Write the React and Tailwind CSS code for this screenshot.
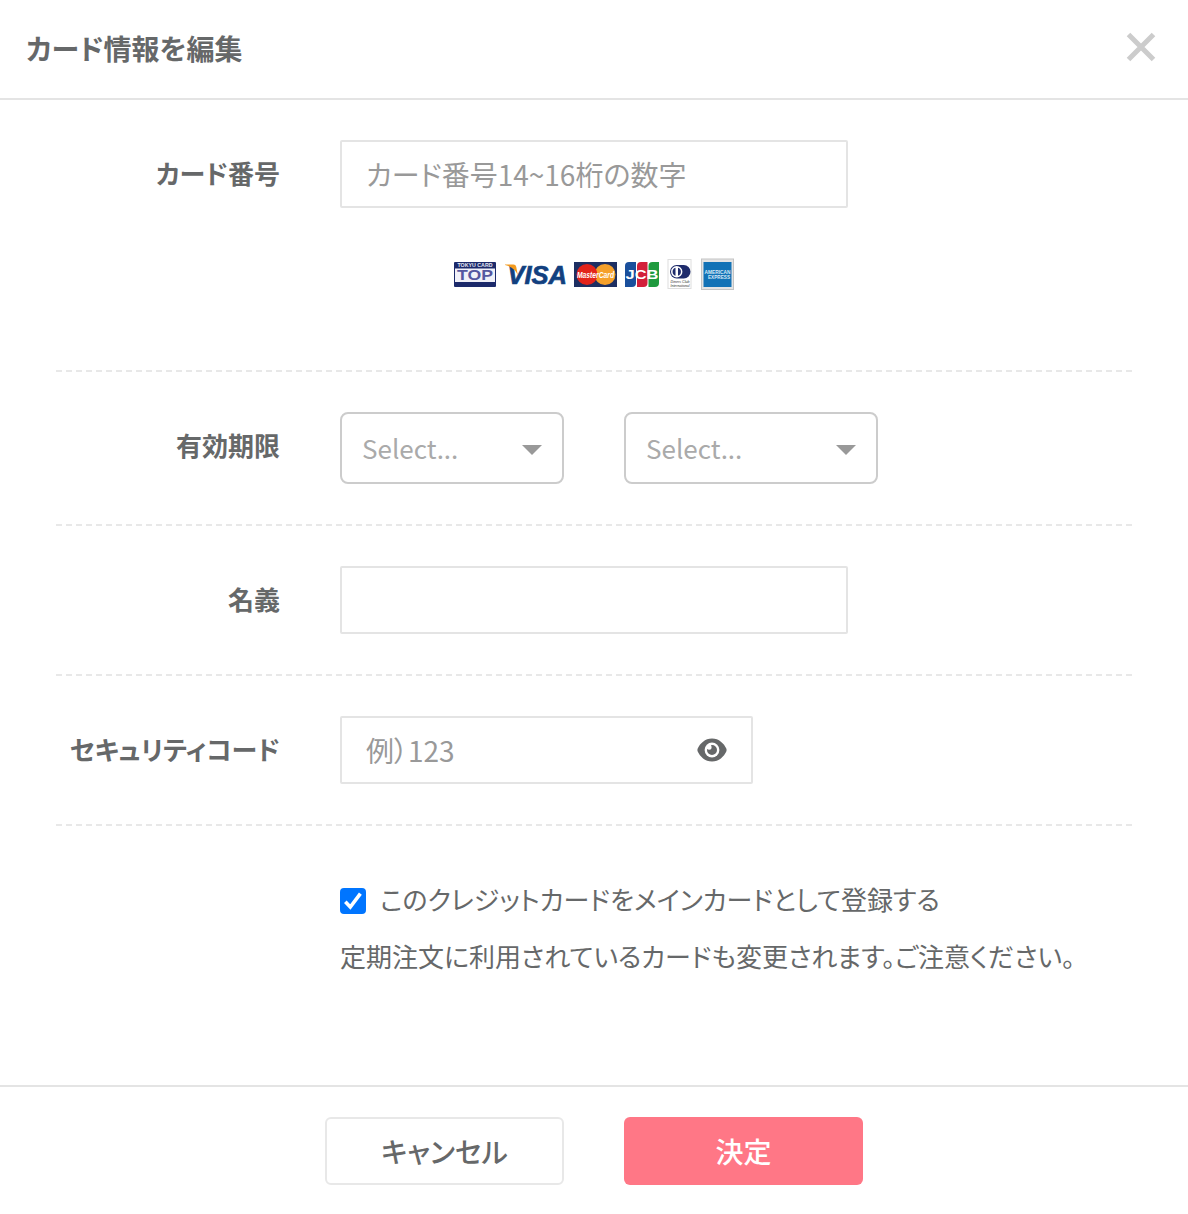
import React, { useState } from 'react'

function Row({ label, children, className = '' }) {
    return (
        <div className={`flex border-b-2 border-dashed border-[#e8e8e8] pt-10 ${className}`}>
            <div className="w-[224px] shrink-0 text-right text-[26px] leading-[66px] font-bold">{label}</div>
            <div className="ml-[60px]">{children}</div>
        </div>
    )
}

function Select({ className }) {
    return (
        <button type="button" className={`flex h-[72px] items-center justify-between rounded-lg border-2 border-[#cccccc] pt-0.5 pr-5 pl-5 ${className}`}>
            <span className="mb-[3px] text-[26px] leading-[39px] text-[#aaaaaa]">Select...</span>
            <svg width="20" height="10" viewBox="0 0 20 10" className="mt-0.5">
                <path d="M0 0h20L10 10z" fill="#999999" />
            </svg>
        </button>
    )
}

function EyeIcon() {
    return (
        <svg width="30" height="24" viewBox="0 0 30 24" className="mb-px shrink-0">
            <path d="M15 .5C22 .5 27 5.500 29.300 10.500q.7 1.500 0 3C27 18.500 22 23.500 15 23.500S3 18.500.7 13.500q-.7-1.500 0-3C3 5.500 8 .5 15 .5z" fill="#666869" />
            <circle cx="15" cy="12" r="7.400" fill="#ffffff" />
            <path d="M15 7a5 5 0 1 1-5 5q0-.5.1-1 .9.7 2 .7a2.500 2.500 0 0 0 2.500-2.500q0-1.200-.7-2 .5-.2 1.100-.2z" fill="#666869" />
        </svg>
    )
}

function CardBrands() {
    return (
        <svg width="282" height="34" viewBox="0 0 282 34" className="block" fontFamily="Liberation Sans, sans-serif">
            {/* Tokyu Top */}
            <rect x="1" y="4" width="42" height="25" rx="1" fill="#1c2a6b" />
            <rect x="2" y="10.500" width="40" height="13.500" fill="#f1f1f9" />
            <text x="22" y="8.800" fontSize="5" fontWeight="700" fill="#e6e8f4" textAnchor="middle" textLength="35" lengthAdjust="spacingAndGlyphs">TOKYU CARD</text>
            <text x="22" y="22.300" fontSize="14" fontWeight="700" fill="#5557a0" textAnchor="middle" textLength="36" lengthAdjust="spacingAndGlyphs">TOP</text>

            {/* Visa */}
            <text x="54.500" y="25.500" fontSize="26" fontWeight="700" fontStyle="italic" fill="#12407f" stroke="#12407f" strokeWidth=".7" textLength="59.500" lengthAdjust="spacingAndGlyphs">VISA</text>
            <path d="M52 6.500h8.500q2.200 0 2.700 2.200l1.600 8.300q-3.200-7.500-12.800-10z" fill="#f39a1d" />

            {/* MasterCard */}
            <rect x="121" y="4" width="43" height="25" fill="#1d2f62" />
            <circle cx="152" cy="16.500" r="10.500" fill="#f5a02a" />
            <circle cx="134" cy="16.500" r="10.500" fill="#e3231b" />
            <text x="142.500" y="19.500" fontSize="8.500" fontWeight="700" fontStyle="italic" fill="#ffffff" textAnchor="middle" textLength="37" lengthAdjust="spacingAndGlyphs">MasterCard</text>

            {/* JCB */}
            <path d="M176 4h7v21q0 4-4 4h-7V8q0-4 4-4z" fill="#1a4f9c" />
            <path d="M188 4h6.500v21q0 4-4 4H184V8q0-4 4-4z" fill="#d2203a" />
            <path d="M199.500 4h6.500v21q0 4-4 4h-6.500V8q0-4 4-4z" fill="#1f9a3e" />
            <text x="189" y="21" fontSize="12" fontWeight="700" fill="#ffffff" textAnchor="middle" textLength="33" lengthAdjust="spacingAndGlyphs">JCB</text>

            {/* Diners Club */}
            <rect x="215" y="1.500" width="23" height="29" fill="#ffffff" stroke="#dedede" />
            <rect x="217" y="7" width="20.500" height="13.500" rx="6.700" fill="#1f2c6c" />
            <circle cx="223.700" cy="13.700" r="5.700" fill="#ffffff" />
            <path d="M222.500 9.700a4.200 4.200 0 0 0 0 8zM225 9.700a4.200 4.200 0 0 1 0 8z" fill="#1f2c6c" />
            <text x="227" y="25" fontSize="4" fontStyle="italic" fill="#333333" textAnchor="middle" textLength="19" lengthAdjust="spacingAndGlyphs">Diners Club</text>
            <text x="227" y="29" fontSize="4" fontStyle="italic" fill="#333333" textAnchor="middle" textLength="19" lengthAdjust="spacingAndGlyphs">International</text>

            {/* American Express */}
            <rect x="248.500" y="1" width="32" height="30.500" fill="#e4e4e4" stroke="#c4c4c4" />
            <rect x="250.500" y="4" width="28" height="25" fill="#1272b6" />
            <text x="264.500" y="15.500" fontSize="5" fontWeight="700" fill="#d7e9f6" textAnchor="middle" textLength="26" lengthAdjust="spacingAndGlyphs">AMERICAN</text>
            <text x="266" y="21.200" fontSize="5" fontWeight="700" fill="#d7e9f6" textAnchor="middle" textLength="22" lengthAdjust="spacingAndGlyphs">EXPRESS</text>
        </svg>
    )
}

export default function App() {
    const [main, setMain] = useState(true)

    return (
        <div className="flex h-[1214px] w-[1188px] flex-col bg-white font-['Noto_Sans_CJK_JP',sans-serif] text-[#666869] [font-feature-settings:'palt']">
            <header className="flex h-[100px] items-center justify-between border-b-2 border-[#e4e4e4] pl-[26px] pr-8">
                <h1 className="mb-0.5 text-[28px] leading-[42px] font-bold">カード情報を編集</h1>
                <button type="button" aria-label="閉じる" className="mb-1">
                    <svg width="30" height="30" viewBox="0 0 30 30" fill="none" stroke="#cccccc" strokeWidth="5" className="block">
                        <path d="M2.500 2.500l25 25M27.500 2.500l-25 25" />
                    </svg>
                </button>
            </header>

            <main className="flex-1 px-14">
                <Row label="カード番号" className="h-[272px]">
                    <input
                        type="text"
                        placeholder="カード番号14~16桁の数字"
                        className="block h-[68px] w-[508px] rounded-[2px] border-2 border-[#e4e4e4] px-6 text-[28px] placeholder:text-[#999999]"
                    />
                    <div className="mt-[50px] flex justify-center">
                        <CardBrands />
                    </div>
                </Row>
                <Row label="有効期限" className="h-[154px]">
                    <div className="flex gap-[60px]">
                        <Select className="w-[224px]" />
                        <Select className="w-[254px]" />
                    </div>
                </Row>
                <Row label="名義" className="h-[150px]">
                    <input type="text" className="block h-[68px] w-[508px] rounded-[2px] border-2 border-[#e4e4e4] px-6 text-[28px]" />
                </Row>
                <Row label="セキュリティコード" className="h-[150px]">
                    <div className="flex h-[68px] w-[413px] items-center rounded-[2px] border-2 border-[#e4e4e4] pr-6 pl-6">
                        <input type="text" placeholder="例）123" className="h-full min-w-0 flex-1 text-[28px] placeholder:text-[#999999]" />
                        <EyeIcon />
                    </div>
                </Row>
                <div className="ml-[284px] pt-[53px] text-[26px] leading-[39px]">
                    <label className="flex items-center">
                        <input type="checkbox" className="peer sr-only" checked={main} onChange={e => setMain(e.target.checked)} />
                        <span className="mt-1 flex size-[26px] items-center justify-center rounded-[4px] border-2 border-[#767676] bg-white peer-checked:border-[#0075ff] peer-checked:bg-[#0075ff]">
                            {main && (
                                <svg width="20" height="20" viewBox="0 0 20 20" fill="none" stroke="#ffffff" strokeWidth="3.600" className="shrink-0">
                                    <path d="M2.300 10.800l5 5.200L17.400 2.700" />
                                </svg>
                            )}
                        </span>
                        <span className="ml-[14px]">このクレジットカードをメインカードとして登録する</span>
                    </label>
                    <p className="mt-[18px]">定期注文に利用されているカードも変更されます。ご注意ください。</p>
                </div>
            </main>

            <footer className="flex h-[129px] justify-center gap-[60px] border-t-2 border-[#e4e4e4] pt-[30px] text-[28px]">
                <button type="button" className="h-[68px] w-[239px] rounded-[6px] border-2 border-[#e8e8e8] font-medium">キャンセル</button>
                <button type="button" className="h-[68px] w-[239px] rounded-[6px] bg-[#ff7786] font-medium text-white">決定</button>
            </footer>
        </div>
    )
}
